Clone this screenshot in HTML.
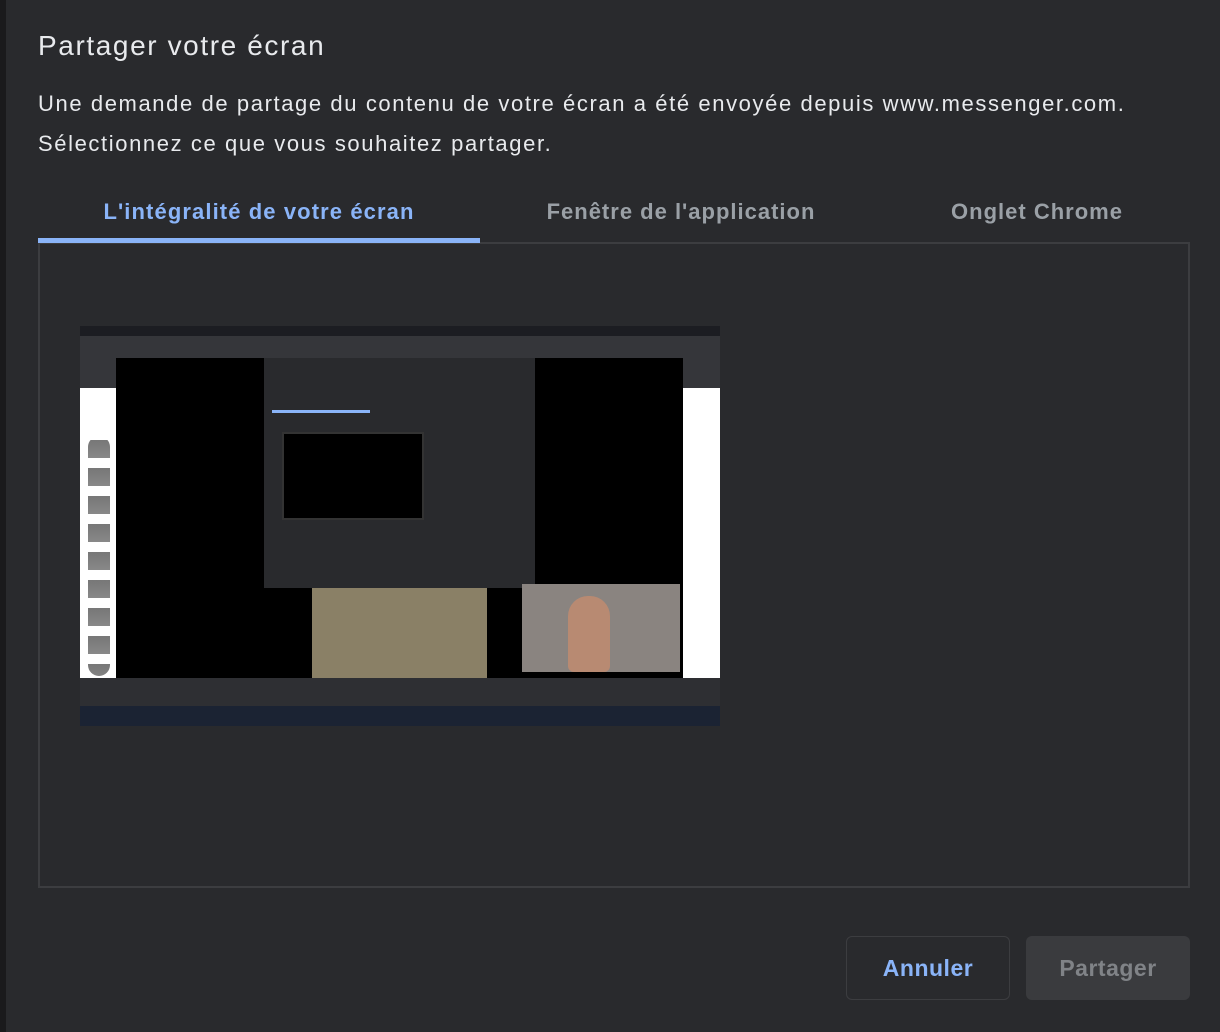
<!DOCTYPE html>
<html><head><meta charset="utf-8"><style>
*{margin:0;padding:0;box-sizing:border-box}
body{width:1220px;height:1032px;background:#292a2d;font-family:"Liberation Sans",sans-serif;position:relative;overflow:hidden}
.a{position:absolute}
</style></head><body>
<div class="a" style="left:0;top:0;width:6px;height:1032px;background:#1a1a1c"></div>
<div class="a" style="left:38px;top:30px;font-size:28px;letter-spacing:1.6px;color:#e8eaed;white-space:nowrap">Partager votre écran</div>
<div class="a" style="left:38px;top:84px;font-size:22px;letter-spacing:1.6px;line-height:40px;color:#e8eaed;white-space:nowrap">Une demande de partage du contenu de votre écran a été envoyée depuis www.messenger.com.<br>Sélectionnez ce que vous souhaitez partager.</div>
<div class="a" style="left:38px;top:199px;width:442px;text-align:center;font-size:22px;letter-spacing:1.1px;font-weight:bold;color:#8ab4f8">L'intégralité de votre écran</div>
<div class="a" style="left:480px;top:199px;width:402px;text-align:center;font-size:22px;letter-spacing:1px;font-weight:bold;color:#9aa0a6">Fenêtre de l'application</div>
<div class="a" style="left:882px;top:199px;width:310px;text-align:center;font-size:22px;letter-spacing:1px;font-weight:bold;color:#9aa0a6">Onglet Chrome</div>
<div class="a" style="left:38px;top:242px;width:1152px;height:646px;border:2px solid #3c3d40"></div>
<div class="a" style="left:38px;top:238px;width:442px;height:5px;background:#8ab4f8"></div>
<div class="a" style="left:80px;top:326px;width:640px;height:400px;background:#2a2b2e;overflow:hidden">
 <div class="a" style="left:0;top:0;width:640px;height:10px;background:#1c1d22"></div>
 <div class="a" style="left:0;top:10px;width:640px;height:52px;background:#35363a"></div>
 <div class="a" style="left:0;top:62px;width:640px;height:290px;background:#fff"></div>
 <div class="a" style="left:8px;top:110px;width:22px;height:240px;background:repeating-linear-gradient(#fff 0,#fff 4px,#777 4px,#888 22px,#fff 22px,#fff 28px);border-radius:11px"></div>
 <div class="a" style="left:36px;top:32px;width:567px;height:320px;background:#000"></div>
 <div class="a" style="left:184px;top:32px;width:271px;height:230px;background:#292a2d"></div>
 <div class="a" style="left:192px;top:84px;width:98px;height:3px;background:#8ab4f8"></div>
 <div class="a" style="left:202px;top:106px;width:142px;height:88px;background:#000;border:2px solid #333"></div>
 <div class="a" style="left:232px;top:262px;width:175px;height:90px;background:#8a8066"></div>
 <div class="a" style="left:442px;top:258px;width:158px;height:88px;background:#8a8480"></div>
 <div class="a" style="left:488px;top:270px;width:42px;height:76px;background:#b88a72;border-radius:20px 20px 6px 6px"></div>
 <div class="a" style="left:0;top:352px;width:640px;height:28px;background:#2e2f33"></div>
 <div class="a" style="left:0;top:380px;width:640px;height:20px;background:#1b2333"></div>
</div>
<div class="a" style="left:846px;top:936px;width:164px;height:64px;border:1px solid #3c3d40;border-radius:6px;color:#8ab4f8;font-size:23px;letter-spacing:0.5px;font-weight:bold;text-align:center;line-height:62px">Annuler</div>
<div class="a" style="left:1026px;top:936px;width:164px;height:64px;background:#3a3b3e;border-radius:6px;color:#808387;font-size:23px;letter-spacing:0.5px;font-weight:bold;text-align:center;line-height:64px">Partager</div>
</body></html>
